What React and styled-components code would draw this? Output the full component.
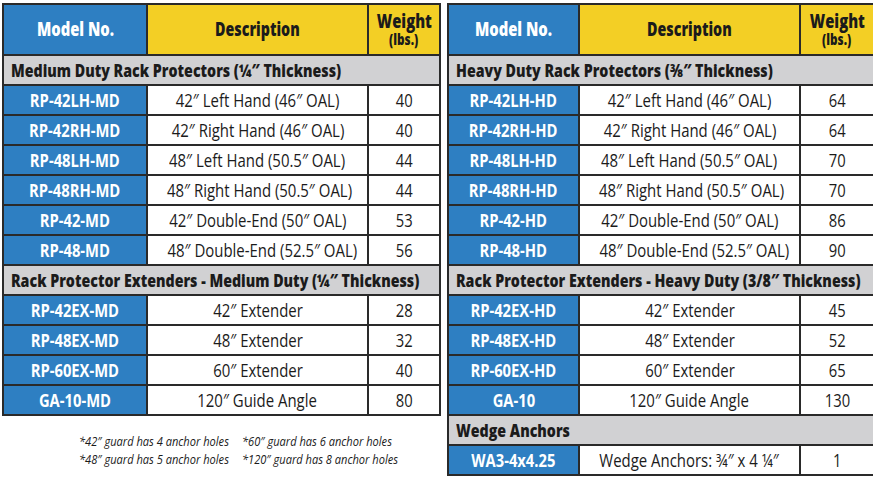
import React from 'react'
import styled, {createGlobalStyle} from 'styled-components'

const GlobalStyle = createGlobalStyle`
    body {
        margin: 0;
        background: #ffffff;
        font-family: "Open Sans", "Noto Sans", "DejaVu Sans", sans-serif;
    }
`;

const Page = styled.div`
    display: flex;
    align-items: flex-start;
    gap: 6px;
    padding: 3px 0 0 2px;
    width: 873px;
    height: 477px;
    box-sizing: border-box;
    overflow: hidden;
`;

const Column = styled.div`
    display: flex;
    flex-direction: column;
`;

// the reference uses a condensed face, so text is squeezed horizontally
const Fit = styled.span`
    display: inline-block;
    white-space: nowrap;
    transform: scaleX(${p => p.$x});
    transform-origin: ${p => p.$left ? 'left' : 'center'} center;
`;

const Table = styled.table`
    border-collapse: collapse;
    table-layout: fixed;
    width: ${p => p.$width}px;
    border: 2px solid #2a2a2a;
`;

const HeadCell = styled.th`
    height: 49px;
    padding: 0;
    border: 2px solid #2a2a2a;
    background: ${p => p.$blue ? '#2e7fc2' : '#f3cf25'};
    color: ${p => p.$blue ? '#ffffff' : '#1b1b1b'};
    font-size: 19px;
    font-weight: 800;
    line-height: 1;
    text-align: center;
    vertical-align: middle;
    white-space: nowrap;
`;

const Small = styled.span`
    display: block;
    font-size: 15px;
    line-height: 1;
    margin-top: 1px;
`;

const SectionCell = styled.td`
    height: 28px;
    padding: 0 0 0 7px;
    border: 2px solid #2a2a2a;
    background: #d1d1d3;
    color: #1b1b1b;
    font-size: 18px;
    font-weight: 800;
    text-align: left;
    white-space: nowrap;
    overflow: hidden;
`;

const ModelCell = styled.td`
    height: 28px;
    padding: 0;
    border: 2px solid #2a2a2a;
    background: #2e7fc2;
    color: #ffffff;
    font-size: 18px;
    font-weight: 700;
    text-align: center;
    white-space: nowrap;
`;

const Cell = styled.td`
    height: 28px;
    padding: 0;
    border: 2px solid #2a2a2a;
    background: #ffffff;
    color: #1b1b1b;
    font-size: 18px;
    text-align: center;
    white-space: nowrap;
`;

const Notes = styled.div`
    display: grid;
    grid-template-columns: 163px auto;
    line-height: 17.5px;
    padding: 17px 0 0 77px;
    font-size: 13.5px;
    font-style: italic;
    color: #1b1b1b;
`;

const leftSections = [
    {
        title: 'Medium Duty Rack Protectors (¼″ Thickness)',
        rows: [
            ['RP-42LH-MD', '42″ Left Hand (46″ OAL)', '40'],
            ['RP-42RH-MD', '42″ Right Hand (46″ OAL)', '40'],
            ['RP-48LH-MD', '48″ Left Hand (50.5″ OAL)', '44'],
            ['RP-48RH-MD', '48″ Right Hand (50.5″ OAL)', '44'],
            ['RP-42-MD', '42″ Double-End (50″ OAL)', '53'],
            ['RP-48-MD', '48″ Double-End (52.5″ OAL)', '56'],
        ],
    },
    {
        title: 'Rack Protector Extenders - Medium Duty (¼″ Thickness)',
        rows: [
            ['RP-42EX-MD', '42″ Extender', '28'],
            ['RP-48EX-MD', '48″ Extender', '32'],
            ['RP-60EX-MD', '60″ Extender', '40'],
            ['GA-10-MD', '120″ Guide Angle', '80'],
        ],
    },
];

const rightSections = [
    {
        title: 'Heavy Duty Rack Protectors (⅜″ Thickness)',
        rows: [
            ['RP-42LH-HD', '42″ Left Hand (46″ OAL)', '64'],
            ['RP-42RH-HD', '42″ Right Hand (46″ OAL)', '64'],
            ['RP-48LH-HD', '48″ Left Hand (50.5″ OAL)', '70'],
            ['RP-48RH-HD', '48″ Right Hand (50.5″ OAL)', '70'],
            ['RP-42-HD', '42″ Double-End (50″ OAL)', '86'],
            ['RP-48-HD', '48″ Double-End (52.5″ OAL)', '90'],
        ],
    },
    {
        title: 'Rack Protector Extenders - Heavy Duty (3/8″ Thickness)',
        rows: [
            ['RP-42EX-HD', '42″ Extender', '45'],
            ['RP-48EX-HD', '48″ Extender', '52'],
            ['RP-60EX-HD', '60″ Extender', '65'],
            ['GA-10', '120″ Guide Angle', '130'],
        ],
    },
    {
        title: 'Wedge Anchors',
        rows: [
            ['WA3-4x4.25', 'Wedge Anchors: ¾″ x 4 ¼″', '1'],
        ],
    },
];

const notes = [
    '*42″ guard has 4 anchor holes',
    '*60″ guard has 6 anchor holes',
    '*48″ guard has 5 anchor holes',
    '*120″ guard has 8 anchor holes',
];

const ProductTable = ({width, cols, sections}) => (
    <Table $width={width}>
        <colgroup>
            {cols.map((w, i) => <col key={i} style={{width: w}}/>)}
        </colgroup>
        <thead>
            <tr>
                <HeadCell $blue><Fit $x={0.78}>Model No.</Fit></HeadCell>
                <HeadCell><Fit $x={0.75}>Description</Fit></HeadCell>
                <HeadCell>
                    <Fit $x={0.78}>Weight</Fit>
                    <Small><Fit $x={0.78}>(lbs.)</Fit></Small>
                </HeadCell>
            </tr>
        </thead>
        <tbody>
            {sections.map(section => (
                <React.Fragment key={section.title}>
                    <tr>
                        <SectionCell colSpan={3}><Fit $x={0.79} $left>{section.title}</Fit></SectionCell>
                    </tr>
                    {section.rows.map(([model, desc, weight]) => (
                        <tr key={model}>
                            <ModelCell><Fit $x={0.82}>{model}</Fit></ModelCell>
                            <Cell><Fit $x={0.83}>{desc}</Fit></Cell>
                            <Cell><Fit $x={0.82}>{weight}</Fit></Cell>
                        </tr>
                    ))}
                </React.Fragment>
            ))}
        </tbody>
    </Table>
);

const App = () => (
    <>
        <GlobalStyle/>
        <Page>
            <Column>
                <ProductTable width={437} cols={[144, 221, 72]} sections={leftSections}/>
                <Notes>
                    {notes.map(n => <Fit key={n} $x={0.82} $left>{n}</Fit>)}
                </Notes>
            </Column>
            <Column>
                <ProductTable width={426} cols={[131, 221, 74]} sections={rightSections}/>
            </Column>
        </Page>
    </>
);

export default App;
